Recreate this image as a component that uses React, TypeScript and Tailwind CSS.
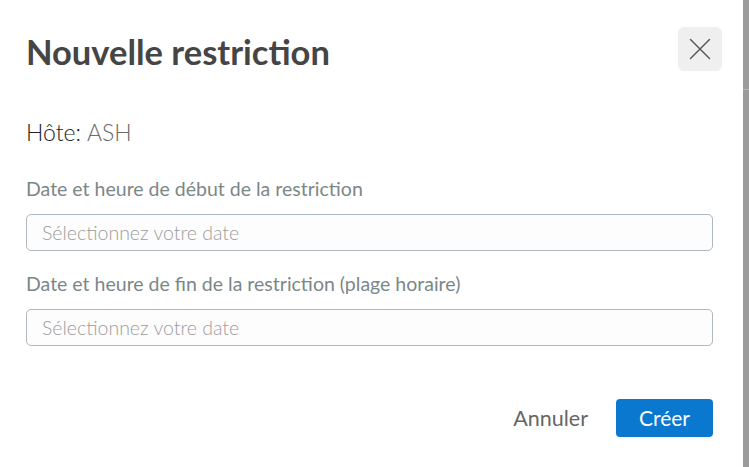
import React from 'react';

const font = { fontFamily: 'Lato, "Open Sans", sans-serif' };

const DateField = ({ label }: { label: string }) => (
  <div className="flex flex-col">
    <label className="text-[19.5px] leading-[23px] text-[#7b8787]">{label}</label>
    <input
      type="text"
      placeholder="Sélectionnez votre date"
      className="mt-[14px] h-[37px] w-full rounded-[5px] border border-[#b0b8bf] bg-[#fdfdfd] px-[15px] text-[19.5px] font-light text-[#555] placeholder:text-[#9c9c9c] outline-none"
    />
  </div>
);

export default function App() {
  return (
    <div className="flex h-screen w-full overflow-hidden" style={font}>
      <div className="flex flex-1 flex-col bg-white pl-[26px] pr-[30px]">
        {/* Header */}
        <div className="mt-[27px] flex h-[44px] items-start justify-between">
          <h1 className="mt-[8px] text-[34.5px] font-bold leading-none text-[#454545]">Nouvelle restriction</h1>
          <button className="-mr-[9px] flex h-[44px] w-[44px] items-center justify-center rounded-[6px] bg-[#efefef]">
            <svg width="22" height="22" viewBox="0 0 22 22" fill="none" stroke="#595959" strokeWidth="1.5" strokeLinecap="round">
              <path d="M1.5 1.5 L20.5 20.5 M20.5 1.5 L1.5 20.5" />
            </svg>
          </button>
        </div>

        <p className="mt-[48px] text-[23px] leading-[27px]">
          <span className="font-light text-[#222]">Hôte:</span> <span className="font-light text-[#6a6a6a]">ASH</span>
        </p>

        <div className="mt-[31px]">
          <DateField label="Date et heure de début de la restriction" />
        </div>
        <div className="mt-[21px]">
          <DateField label="Date et heure de fin de la restriction (plage horaire)" />
        </div>

        {/* Footer */}
        <div className="mt-[53px] flex items-center justify-end gap-[28px]">
          <button className="text-[21.5px] text-[#666]">Annuler</button>
          <button className="h-[38px] w-[97px] rounded-[4px] bg-[#0a78cf] text-[21px] text-white">Créer</button>
        </div>
      </div>
      <div className="flex w-[6px] flex-col bg-[#9b9b9b]">
        <div className="h-[90px] border-b border-[#b5b5b5]" />
      </div>
    </div>
  );
}
